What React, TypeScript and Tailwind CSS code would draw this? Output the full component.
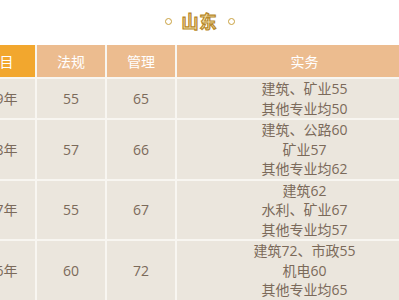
import React from "react";

interface Row {
  year: string;
  law: string;
  manage: string;
  practice: string[];
}

const rows: Row[] = [
  { year: "2019年", law: "55", manage: "65", practice: ["建筑、矿业55", "其他专业均50"] },
  { year: "2018年", law: "57", manage: "66", practice: ["建筑、公路60", "矿业57", "其他专业均62"] },
  { year: "2017年", law: "55", manage: "67", practice: ["建筑62", "水利、矿业67", "其他专业均57"] },
  { year: "2016年", law: "60", manage: "72", practice: ["建筑72、市政55", "机电60", "其他专业均65"] },
];

export default function App() {
  return (
    <div
      className="w-full h-[300px] overflow-hidden bg-white"
      style={{ fontFamily: '"Open Sans", "Noto Sans CJK SC", sans-serif' }}
    >
      {/* title */}
      <div className="h-[45px] flex items-center justify-center gap-[10px] pb-[2px]">
        <span className="w-[7px] h-[7px] rounded-full border-[1.5px] border-[#c9a13f]" />
        <span className="text-[17px] font-bold leading-none text-[#f4e3ad] [-webkit-text-stroke:1.2px_#b8892a] tracking-[1px]">
          山东
        </span>
        <span className="w-[7px] h-[7px] rounded-full border-[1.5px] border-[#c9a13f]" />
      </div>

      {/* table */}
      <div className="-ml-[36px] w-[468px] grid grid-cols-[71px_68px_68px_255px] gap-[2px] bg-[#f8f6f1] text-[14px]">
        <div className="h-[32px] flex items-center justify-center bg-[#f2a72e] text-white">科目</div>
        <div className="h-[32px] flex items-center justify-center bg-[#ecbc8f] text-white">法规</div>
        <div className="h-[32px] flex items-center justify-center bg-[#ecbc8f] text-white">管理</div>
        <div className="h-[32px] flex items-center justify-center bg-[#ecbc8f] text-white">实务</div>

        {rows.map((r) => (
          <React.Fragment key={r.year}>
            <div className="flex items-center justify-center pr-[10px] bg-[#ebe6dd] text-[#7b6a5a]">{r.year}</div>
            <div className="flex items-center justify-center bg-[#ebe6dd] text-[#7b6a5a]">{r.law}</div>
            <div className="flex items-center justify-center bg-[#ebe6dd] text-[#7b6a5a]">{r.manage}</div>
            <div className="flex flex-col items-center justify-center bg-[#ebe6dd] text-[#7b6a5a] leading-[19.5px]">
              {r.practice.map((p) => (
                <span key={p}>{p}</span>
              ))}
            </div>
          </React.Fragment>
        ))}
      </div>
    </div>
  );
}
